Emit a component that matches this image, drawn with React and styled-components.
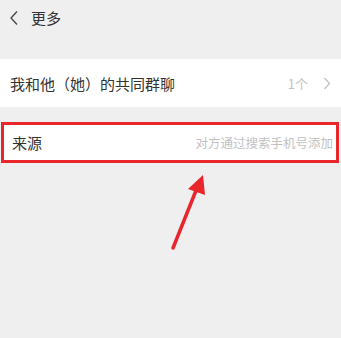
import styled, { createGlobalStyle } from "styled-components";

const GlobalStyle = createGlobalStyle`
  html, body {
    margin: 0;
    padding: 0;
    background: #efefef;
  }
  body {
    font-family: "Noto Sans CJK SC", "Noto Sans", sans-serif;
  }
`;

const Page = styled.div`
  position: relative;
  width: 341px;
  height: 338px;
  background: #efefef;
  overflow: hidden;
`;

const Header = styled.div`
  display: flex;
  align-items: center;
  height: 35px;
  padding-left: 9px;
  gap: 12px;
`;

const Title = styled.span`
  font-size: 15px;
  color: #333;
`;

const List = styled.div`
  margin-top: 24px;
  display: flex;
  flex-direction: column;
`;

const Row = styled.div`
  display: flex;
  align-items: center;
  justify-content: space-between;
  height: ${(p) => p.h || 48}px;
  padding: 0 ${(p) => p.pr || 10}px 0 ${(p) => p.pl || 10}px;
  background: #fff;
`;

const Label = styled.span`
  font-size: 15px;
  color: #333;
`;

const Extra = styled.span`
  display: flex;
  align-items: center;
  gap: 15px;
  font-size: ${(p) => p.size || 13}px;
  color: #c2c2c2;
`;

const Gap = styled.div`
  height: 15px;
`;

const Highlight = styled.div`
  margin: 0 2px 0 1px;
  border: 3px solid #e8262b;
`;

const Arrow = styled.svg`
  position: absolute;
  left: 160px;
  top: 170px;
`;

const Back = () => (
  <svg width="10" height="16" viewBox="0 0 10 16">
    <path d="M8 1.5 L2 8 L8 14.5" fill="none" stroke="#444" strokeWidth="1.3" />
  </svg>
);

const Chevron = () => (
  <svg width="8" height="13" viewBox="0 0 8 13">
    <path d="M1.5 1 L6.5 6.5 L1.5 12" fill="none" stroke="#c2c2c2" strokeWidth="1.3" />
  </svg>
);

export default function App() {
  return (
    <>
      <GlobalStyle />
      <Page>
        <Header>
          <Back />
          <Title>更多</Title>
        </Header>
        <List>
          <Row>
            <Label>我和他（她）的共同群聊</Label>
            <Extra>
              1个
              <Chevron />
            </Extra>
          </Row>
          <Gap />
          <Highlight>
            <Row h={35} pl={8} pr={3}>
              <Label>来源</Label>
              <Extra size={12.5}>对方通过搜索手机号添加</Extra>
            </Row>
          </Highlight>
        </List>
        <Arrow width="60" height="90" viewBox="0 0 60 90">
          <line x1="13" y1="78" x2="37" y2="18" stroke="#e8262b" strokeWidth="3.5" strokeLinecap="round" />
          <polygon points="43,5 45,25 28,19" fill="#e8262b" />
        </Arrow>
      </Page>
    </>
  );
}
